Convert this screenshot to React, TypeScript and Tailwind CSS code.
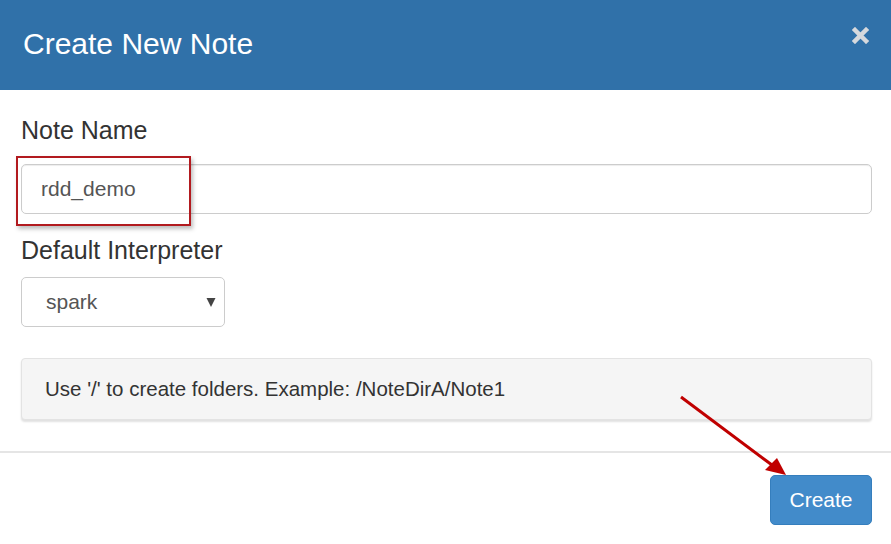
import React from 'react';

const font = { fontFamily: '"Liberation Sans", Arial, sans-serif' };

export default function App() {
  return (
    <div className="relative w-[891px] h-[544px] bg-white overflow-hidden" style={font}>
      {/* header */}
      <div className="h-[90px] bg-[#3071a9] flex items-start justify-between pl-[23px] pr-[22px]">
        <h4 className="mt-[27px] text-[30px] leading-[34px] text-white">Create New Note</h4>
        <svg className="mt-[27px]" width="17" height="17" viewBox="0 0 17 17">
          <path d="M3 3 L14 14 M14 3 L3 14" stroke="#d6d9dd" strokeWidth="4.5" strokeLinecap="square" />
        </svg>
      </div>

      {/* body */}
      <div className="px-[21px] pr-[19px]">
        <label className="block mt-[26px] text-[25px] leading-[29px] text-[#333]">Note Name</label>
        <div className="mt-[19px] h-[50px] rounded-[5px] border border-[#cccccc] shadow-[inset_0_1px_1px_rgba(0,0,0,0.075)] flex items-center pl-[19px] text-[21px] text-[#555]">
          rdd_demo
        </div>

        <label className="block mt-[22px] text-[25px] leading-[29px] text-[#333]">Default Interpreter</label>
        <div className="mt-[12px] w-[204px] h-[50px] rounded-[5px] border border-[#cccccc] flex items-center justify-between pl-[24px] pr-[8px] text-[21px] text-[#555]">
          <span>spark</span>
          <svg width="10" height="10" viewBox="0 0 10 10">
            <polygon points="0.5,1 9.5,1 5,10" fill="#444" />
          </svg>
        </div>

        <div className="mt-[31px] h-[62px] rounded-[4px] border border-[#e3e3e3] bg-[#f5f5f5] shadow-[0_2px_2px_rgba(0,0,0,0.12)] flex items-center pl-[23px] text-[20.5px] text-[#333]">
          Use '/' to create folders. Example: /NoteDirA/Note1
        </div>
      </div>

      {/* footer */}
      <div className="mt-[31px] border-t-2 border-[#e5e5e5] flex justify-end pt-[22px] pr-[19px]">
        <button className="w-[102px] h-[50px] rounded-[5px] bg-[#428bca] border border-[#357ebd] text-white text-[21px]">
          Create
        </button>
      </div>

      {/* annotation: red highlight box */}
      <div className="absolute left-[16px] top-[156px] w-[175px] h-[70px] border-2 border-[#b21a1f] shadow-[2px_3px_4px_rgba(0,0,0,0.25)]" />

      {/* annotation: arrow */}
      <svg className="absolute left-0 top-0 pointer-events-none" width="891" height="544">
        <line x1="681" y1="397" x2="772" y2="465" stroke="#c00000" strokeWidth="3" />
        <polygon points="786,475 765,470 777,458" fill="#c00000" />
      </svg>
    </div>
  );
}
